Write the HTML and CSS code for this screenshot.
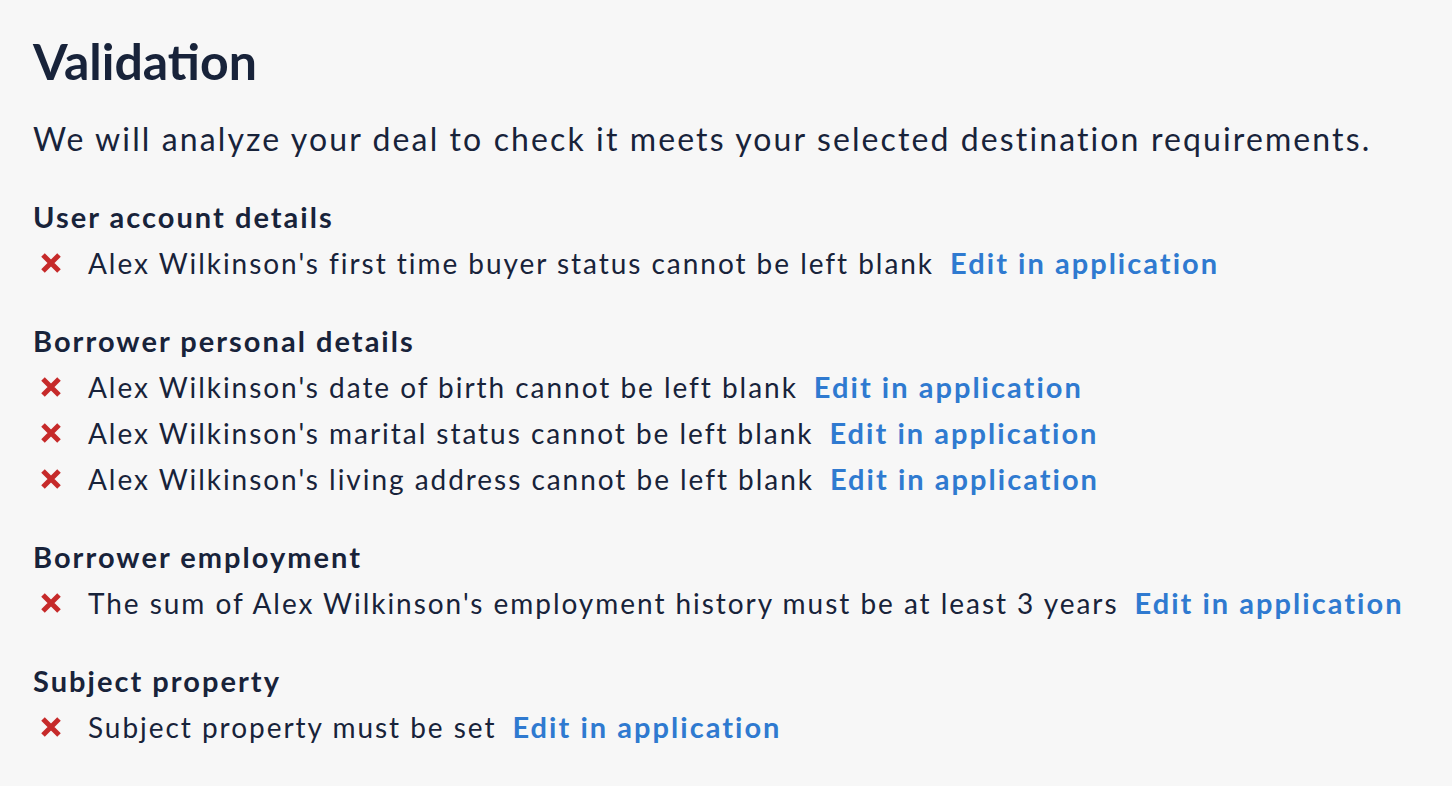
FILE: index.html
```html
<!DOCTYPE html>
<html lang="en">
<head>
    <meta charset="UTF-8">
    <meta name="viewport" content="width=device-width, initial-scale=1.0">
    <title>Validation</title>
    <link rel="stylesheet" href="styles.css">
</head>
<body>

    <main class="validation">
        <h1>Validation</h1>
        <p class="intro">We will analyze your deal to check it meets your selected destination requirements.</p>

        <!-- User account -->
        <section class="group">
            <h2>User account details</h2>
            <ul>
                <li>
                    <svg class="cross" viewBox="0 0 22 20"><path d="M3 2 L19 18 M19 2 L3 18"/></svg>
                    <span>Alex Wilkinson's first time buyer status cannot be left blank</span>
                    <a href="#">Edit in application</a>
                </li>
            </ul>
        </section>

        <!-- Borrower personal -->
        <section class="group">
            <h2>Borrower personal details</h2>
            <ul>
                <li>
                    <svg class="cross" viewBox="0 0 22 20"><path d="M3 2 L19 18 M19 2 L3 18"/></svg>
                    <span>Alex Wilkinson's date of birth cannot be left blank</span>
                    <a href="#">Edit in application</a>
                </li>
                <li>
                    <svg class="cross" viewBox="0 0 22 20"><path d="M3 2 L19 18 M19 2 L3 18"/></svg>
                    <span>Alex Wilkinson's marital status cannot be left blank</span>
                    <a href="#">Edit in application</a>
                </li>
                <li>
                    <svg class="cross" viewBox="0 0 22 20"><path d="M3 2 L19 18 M19 2 L3 18"/></svg>
                    <span>Alex Wilkinson's living address cannot be left blank</span>
                    <a href="#">Edit in application</a>
                </li>
            </ul>
        </section>

        <!-- Employment -->
        <section class="group">
            <h2>Borrower employment</h2>
            <ul>
                <li>
                    <svg class="cross" viewBox="0 0 22 20"><path d="M3 2 L19 18 M19 2 L3 18"/></svg>
                    <span>The sum of Alex Wilkinson's employment history must be at least 3 years</span>
                    <a href="#">Edit in application</a>
                </li>
            </ul>
        </section>

        <!-- Property -->
        <section class="group">
            <h2>Subject property</h2>
            <ul>
                <li>
                    <svg class="cross" viewBox="0 0 22 20"><path d="M3 2 L19 18 M19 2 L3 18"/></svg>
                    <span>Subject property must be set</span>
                    <a href="#">Edit in application</a>
                </li>
            </ul>
        </section>
    </main>

</body>
</html>
```

FILE: styles.css
```css
body {
    font-family: Lato, "Noto Sans", sans-serif;
    background-color: #f7f7f7;
    margin: 0;
    padding: 0;
    color: #18233a;
}

.validation {
    padding: 26px 33px 0 33px;
}

h1 {
    font-size: 50px;
    font-weight: 700;
    line-height: 70px;
    margin: 0;
}

.intro {
    font-size: 32px;
    line-height: 46px;
    letter-spacing: 0.066em;
    margin: 20px 0 32px 0;
}

.group {
    margin-bottom: 32px;
}

h2 {
    font-size: 29px;
    font-weight: 700;
    line-height: 46px;
    letter-spacing: 0.07em;
    margin: 0;
}

ul {
    list-style: none;
    margin: 0;
    padding: 0;
}

li {
    display: flex;
    align-items: center;
    font-size: 28px;
    line-height: 46px;
    letter-spacing: 0.07em;
}

.cross {
    width: 22px;
    height: 20px;
    margin: 0 26px 0 7px;
    flex-shrink: 0;
}

.cross path {
    stroke: #c62a2a;
    stroke-width: 5;
    fill: none;
}

li a {
    color: #2f7ad0;
    font-weight: 700;
    font-size: 29px;
    letter-spacing: 0.07em;
    text-decoration: none;
    margin-left: 16px;
}
```
